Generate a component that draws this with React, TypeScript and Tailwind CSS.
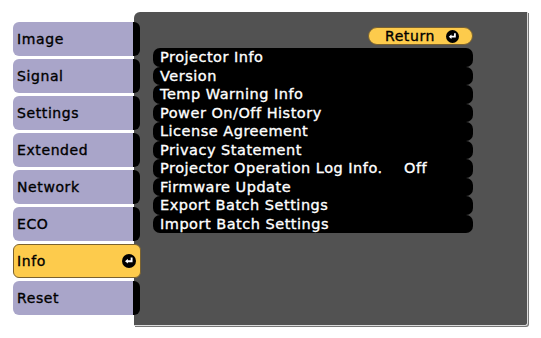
import React from 'react';

const tabs = ['Image', 'Signal', 'Settings', 'Extended', 'Network', 'ECO', 'Info', 'Reset'];

const items: { label: string; value?: string }[] = [
  { label: 'Projector Info' },
  { label: 'Version' },
  { label: 'Temp Warning Info' },
  { label: 'Power On/Off History' },
  { label: 'License Agreement' },
  { label: 'Privacy Statement' },
  { label: 'Projector Operation Log Info.', value: 'Off' },
  { label: 'Firmware Update' },
  { label: 'Export Batch Settings' },
  { label: 'Import Batch Settings' },
];

// black disc with the white "enter" arrow
const EnterIcon: React.FC<{ size?: number }> = ({ size = 14 }) => (
  <svg width={size} height={size} viewBox="0 0 14 14">
    <circle cx="7" cy="7" r="7" fill="#000" />
    <path d="M9.6 3.6v3.6H5" fill="none" stroke="#fff" strokeWidth="1.9" />
    <path d="M3 7.2l2.9-2.4v4.8z" fill="#fff" />
  </svg>
);

const Tab: React.FC<{ label: string; active: boolean }> = ({ label, active }) => {
  if (active) {
    return (
      <div className="h-[34px] w-[128px] flex items-center justify-between pl-[3px] pr-[4px] bg-[#fdcb4c] border border-[#7a6230] rounded-[6px]">
        <span>{label}</span>
        <EnterIcon />
      </div>
    );
  }
  return (
    <div className="h-[34px] w-[127px] flex">
      <div className="w-[120px] flex items-center pl-[4px] bg-[#a9a5c9] rounded-l-[6px]">{label}</div>
      <div className="w-[7px] bg-black rounded-r-[6px]" />
    </div>
  );
};

export default function App() {
  return (
    <div
      className="w-[541px] h-[338px] bg-white flex pt-[12px] pl-[13px] text-black tracking-[0.6px] [-webkit-text-stroke:0.35px_currentColor]"
      style={{ fontFamily: '"DejaVu Sans", Verdana, sans-serif' }}
    >
      <div className="relative z-10 flex flex-col gap-[3px] pt-[10px] text-[14px]">
        {tabs.map((t) => (
          <Tab key={t} label={t} active={t === 'Info'} />
        ))}
      </div>

      <div className="-ml-[7px] w-[394px] h-[314px] bg-[#525252] rounded-tl-[6px] rounded-br-[3px] border-r border-b border-[#dcdcdc] shadow-[1px_1px_0_#777] flex flex-col items-end pr-[54px] pt-[15px]">
        <div className="h-[18px] w-[105px] flex items-center justify-end gap-[11px] pr-[13px] bg-[#fdcb4c] border border-[#7a6230] rounded-full text-[14px] leading-none">
          <span>Return</span>
          <EnterIcon size={13} />
        </div>

        <div className="mt-[3px] w-[320px] flex flex-col text-white text-[14.5px] leading-none tracking-[0.5px]">
          {items.map((it) => (
            <div key={it.label} className="h-[18.5px] flex items-center pl-[7px] bg-black rounded-[7px]">
              <span className="w-[244px]">{it.label}</span>
              {it.value && <span>{it.value}</span>}
            </div>
          ))}
        </div>
      </div>
    </div>
  );
}
